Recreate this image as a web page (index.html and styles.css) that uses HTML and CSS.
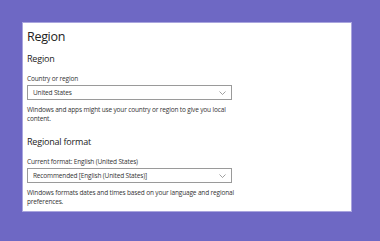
FILE: index.html
```html
<!DOCTYPE html>
<html>
<head>
    <title>Region</title>
    <meta charset="utf-8">
    <link rel="stylesheet" href="styles.css">
</head>
<body>
    <div class="panel">
        <h1>Region</h1>

        <h2>Region</h2>
        <label class="field-label">Country or region</label>
        <div class="select">
            <span>United States</span>
            <svg class="chevron" width="7" height="4" viewBox="0 0 7 4"><path d="M0.5 0.5 L3.5 3.5 L6.5 0.5" fill="none" stroke="#777" stroke-width="0.7"/></svg>
        </div>
        <p class="hint">Windows and apps might use your country or region to give you local content.</p>

        <h2 class="section">Regional format</h2>
        <label class="field-label">Current format: English (United States)</label>
        <div class="select">
            <span>Recommended [English (United States)]</span>
            <svg class="chevron" width="7" height="4" viewBox="0 0 7 4"><path d="M0.5 0.5 L3.5 3.5 L6.5 0.5" fill="none" stroke="#777" stroke-width="0.7"/></svg>
        </div>
        <p class="hint">Windows formats dates and times based on your language and regional preferences.</p>
    </div>
</body>
</html>
```

FILE: styles.css
```css
body {
    margin: 0;
    padding: 22px;
    background-color: #6e68c4;
    font-family: "Open Sans", "Noto Sans", sans-serif;
    color: #222;
}
.panel {
    width: 330px;
    height: 190px;
    box-sizing: border-box;
    background-color: white;
    border: 1px solid #a9a5de;
    padding: 5px 0 0 4px;
}
h1 {
    font-size: 12.5px;
    font-weight: normal;
    letter-spacing: -0.3px;
    margin: 0;
    line-height: 18px;
}
h2 {
    font-size: 9px;
    font-weight: normal;
    letter-spacing: -0.2px;
    margin: 7px 0 0 0;
    line-height: 12px;
}
h2.section {
    margin-top: 13px;
}
.field-label {
    display: block;
    font-size: 6.5px;
    letter-spacing: -0.15px;
    margin-top: 9px;
    line-height: 9px;
    color: #333;
}
.select {
    width: 205px;
    height: 15px;
    box-sizing: border-box;
    border: 1px solid #9a9a9a;
    margin-top: 2px;
    display: flex;
    align-items: center;
    justify-content: space-between;
    padding: 0 5px;
    font-size: 6.5px;
    letter-spacing: -0.15px;
    color: #333;
}
.chevron {
    display: block;
}
.hint {
    font-size: 6.5px;
    letter-spacing: -0.15px;
    line-height: 9px;
    margin: 5px 0 0 0;
    width: 210px;
    color: #333;
}
```
